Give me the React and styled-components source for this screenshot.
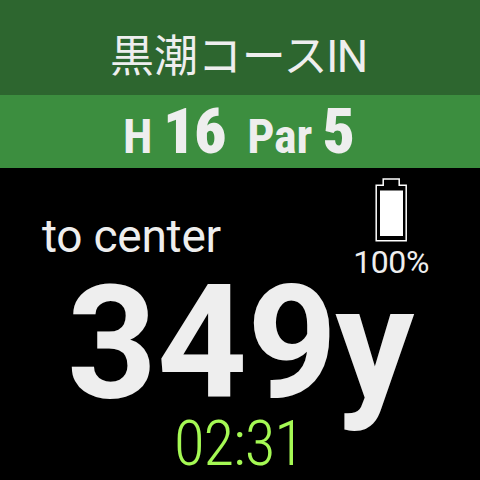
import React from "react";
import styled, { createGlobalStyle } from "styled-components";

const colors = {
    header: "#2d662f",
    hole: "#3c8e3f",
    text: "#eeeeee",
    clock: "#a5f954",
};

const App = () => {
    return (
        <>
            <GlobalStyle />
            <Watch>
                <CourseBar>
                    <CourseName>黒潮コース<span>IN</span></CourseName>
                </CourseBar>
                <HoleBar>
                    <HoleItem>H <b>16</b></HoleItem>
                    <HoleItem>Par <b>5</b></HoleItem>
                </HoleBar>
                <StatusRow>
                    <Target>to center</Target>
                    <BatteryStatus>
                        <BatteryIcon />
                        <BatteryLevel>100%</BatteryLevel>
                    </BatteryStatus>
                </StatusRow>
                <Distance>349<span>y</span></Distance>
                <Clock>02:31</Clock>
            </Watch>
        </>
    );
};

const BatteryIcon = () => (
    <svg width="32" height="64" viewBox="0 0 32 64" fill="none">
        <path d="M8.2 1h16v6.2h7v55.5h-30v-55.5h7z" stroke="#fff" strokeWidth="1.5" />
        <rect x="5" y="12.5" width="23" height="45.5" fill="#fff" />
    </svg>
);

const GlobalStyle = createGlobalStyle`
    body {
        margin: 0;
        background: #000;
    }
`;

const Watch = styled.div`
    display: flex;
    flex-direction: column;
    width: 480px;
    height: 480px;
    overflow: hidden;
    background: #000;
    color: ${colors.text};
    font-family: Roboto, "Noto Sans CJK JP", sans-serif;
    white-space: nowrap;
`;

const CourseBar = styled.header`
    display: flex;
    height: 95px;
    padding-left: 110px;
    background: ${colors.header};
`;

const CourseName = styled.div`
    padding-top: 25px;
    font-size: 44px;
    line-height: 64px;
    letter-spacing: -0.1px;

    & span {
        margin-left: -1px;
        letter-spacing: -1.5px;
    }
`;

const HoleBar = styled.div`
    display: flex;
    gap: 22px;
    height: 73px;
    padding-left: 123px;
    background: ${colors.hole};
    line-height: 73px;
`;

const HoleItem = styled.div`
    font-family: "Roboto Condensed", Roboto, sans-serif;
    font-size: 48px;
    font-stretch: 75%;
    font-weight: bold;
    letter-spacing: -0.3px;

    & b {
        font-size: 63px;
        letter-spacing: -1px;
    }
`;

const StatusRow = styled.div`
    display: flex;
    justify-content: space-between;
    height: 113px;
    padding: 0 51px 0 42px;
`;

const Target = styled.div`
    padding-top: 40px;
    font-size: 46px;
    line-height: 56px;
    letter-spacing: -0.25px;
`;

const BatteryStatus = styled.div`
    display: flex;
    flex-direction: column;
    align-items: center;
    padding-top: 10px;

    & svg {
        flex-shrink: 0;
    }
`;

const BatteryLevel = styled.div`
    font-size: 32px;
    line-height: 41px;
    letter-spacing: -0.4px;
`;

const Distance = styled.div`
    height: 132px;
    padding-left: 67px;
    font-size: 157px;
    font-weight: bold;
    line-height: 124px;

    & span {
        margin-left: -2px;
    }
`;

const Clock = styled.div`
    padding-left: 174px;
    font-family: "Roboto Condensed", Roboto, sans-serif;
    font-size: 63px;
    font-stretch: 75%;
    font-weight: 300;
    line-height: 62px;
    letter-spacing: -1.1px;
    color: ${colors.clock};
`;

export default App;
